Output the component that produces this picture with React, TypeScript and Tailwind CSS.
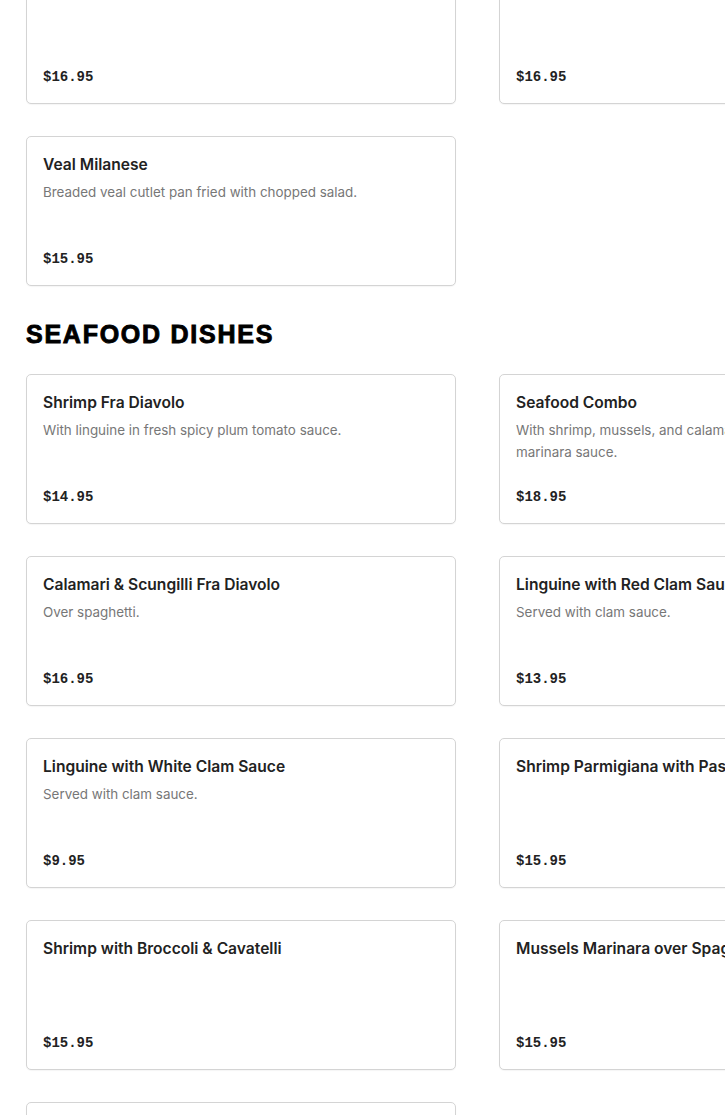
type Dish = { name: string; desc?: string; price: string }

const topRow: (Dish | null)[] = [
  { name: "", price: "$16.95" },
  { name: "", price: "$16.95" },
  { name: "Veal Milanese", desc: "Breaded veal cutlet pan fried with chopped salad.", price: "$15.95" },
  null,
]

const seafood: Dish[] = [
  { name: "Shrimp Fra Diavolo", desc: "With linguine in fresh spicy plum tomato sauce.", price: "$14.95" },
  { name: "Seafood Combo", desc: "With shrimp, mussels, and calamari over linguine in marinara sauce.", price: "$18.95" },
  { name: "Calamari & Scungilli Fra Diavolo", desc: "Over spaghetti.", price: "$16.95" },
  { name: "Linguine with Red Clam Sauce", desc: "Served with clam sauce.", price: "$13.95" },
  { name: "Linguine with White Clam Sauce", desc: "Served with clam sauce.", price: "$9.95" },
  { name: "Shrimp Parmigiana with Pasta", price: "$15.95" },
  { name: "Shrimp with Broccoli & Cavatelli", price: "$15.95" },
  { name: "Mussels Marinara over Spaghetti", price: "$15.95" },
  { name: "Chicken Francese", price: "$15.95" },
]

function Card({ dish }: { dish: Dish }) {
  return (
    <div className="w-[430px] h-[150px] border border-[#d4d4d4] rounded-[5px] bg-white px-4 pt-4 pb-4 flex flex-col shadow-[0_1px_1px_rgba(0,0,0,0.04)]">
      {dish.name && (
        <div className="text-[15.6px] leading-6 font-semibold text-[#222] whitespace-nowrap">{dish.name}</div>
      )}
      {dish.desc && <div className="mt-1 max-w-[370px] text-[13.4px] leading-[22px] text-[#777]">{dish.desc}</div>}
      <div className="mt-auto text-[14px] leading-5 font-bold text-[#222] font-['Liberation_Mono',monospace]">
        {dish.price}
      </div>
    </div>
  )
}

export default function App() {
  return (
    <div className="bg-white w-[725px] h-[1115px] overflow-hidden font-['Inter',sans-serif]">
      <div className="pl-[26px] -mt-[46px]">
        <div className="grid grid-cols-[430px_430px] gap-x-[43px] gap-y-[32px]">
          {topRow.map((d, i) => (d ? <Card key={i} dish={d} /> : <div key={i} />))}
        </div>
        <h2 className="mt-[30px] text-[25px] leading-9 font-bold tracking-[0.07em] text-black [-webkit-text-stroke:0.9px_black] font-['Liberation_Sans',sans-serif]">
          SEAFOOD DISHES
        </h2>
        <div className="mt-[22px] grid grid-cols-[430px_430px] gap-x-[43px] gap-y-[32px]">
          {seafood.map((d, i) => (
            <Card key={i} dish={d} />
          ))}
        </div>
      </div>
    </div>
  )
}
